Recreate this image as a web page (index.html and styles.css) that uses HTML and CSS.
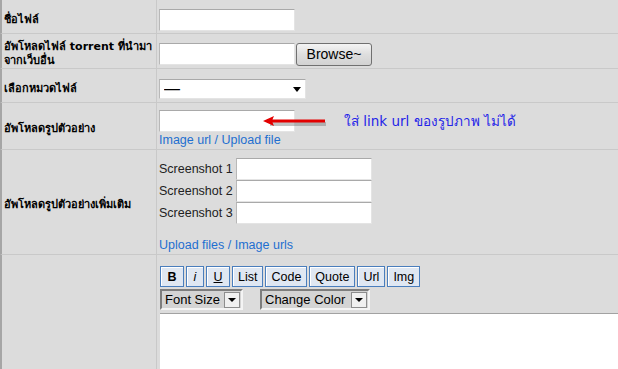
FILE: index.html
```html
<!DOCTYPE html>
<html lang="th">
<head>
    <meta charset="UTF-8">
    <meta name="viewport" content="width=device-width, initial-scale=1.0">
    <title>อัพโหลดไฟล์</title>
    <link rel="stylesheet" href="styles.css">
</head>
<body>
    <table class="upload-form">
        <tr class="row-name">
            <th>ชื่อไฟล์</th>
            <td><input type="text" class="text-field"></td>
        </tr>
        <tr class="row-torrent">
            <th>อัพโหลดไฟล์ torrent ที่นำมา<br>จากเว็บอื่น</th>
            <td><input type="text" class="text-field"><button class="browse-btn">Browse~</button></td>
        </tr>
        <tr class="row-category">
            <th>เลือกหมวดไฟล์</th>
            <td>
                <span class="select-box">
                    <select><option>—</option></select>
                </span>
            </td>
        </tr>
        <tr class="row-preview">
            <th>อัพโหลดรูปตัวอย่าง</th>
            <td>
                <div class="preview-field">
                    <input type="text" class="text-field">
                    <div class="annotation">
                        <svg class="note-arrow" width="66" height="14" viewBox="0 0 66 14">
                            <path d="M8 9 L64 9" stroke="#7a7a7a" stroke-width="4" opacity="0.45"/>
                            <path d="M1 6 L12 1 L10.5 4.6 L63 4.6 L63 7.6 L10.5 7.6 L12 11 Z" fill="#e30000"/>
                        </svg>
                        <span class="note-text">ใส่ link url ของรูปภาพ ไม่ได้</span>
                    </div>
                </div>
                <a class="link" href="#">Image url / Upload file</a>
            </td>
        </tr>
        <tr class="row-screens">
            <th>อัพโหลดรูปตัวอย่างเพิ่มเติม</th>
            <td>
                <div class="screens">
                    <label for="shot1">Screenshot 1</label>
                    <input type="text" id="shot1" class="text-field">
                    <label for="shot2">Screenshot 2</label>
                    <input type="text" id="shot2" class="text-field">
                    <label for="shot3">Screenshot 3</label>
                    <input type="text" id="shot3" class="text-field">
                </div>
                <a class="link" href="#">Upload files / Image urls</a>
            </td>
        </tr>
        <tr class="row-editor">
            <th></th>
            <td>
                <div class="toolbar">
                    <button class="tb-btn tb-bold">B</button>
                    <button class="tb-btn tb-italic">i</button>
                    <button class="tb-btn tb-under">U</button>
                    <button class="tb-btn">List</button>
                    <button class="tb-btn">Code</button>
                    <button class="tb-btn">Quote</button>
                    <button class="tb-btn">Url</button>
                    <button class="tb-btn">Img</button>
                </div>
                <div class="toolbar-selects">
                    <span class="old-select sel-size">Font Size<span class="drop"></span></span>
                    <span class="old-select sel-color">Change Color<span class="drop"></span></span>
                </div>
                <textarea class="editor"></textarea>
            </td>
        </tr>
    </table>
</body>
</html>
```

FILE: styles.css
```css
html, body {
    margin: 0;
    padding: 0;
    overflow: hidden;
}
body {
    background-color: #dcdcdc;
    font-family: "Liberation Sans", "Noto Sans", sans-serif;
    font-size: 12px;
    color: #000;
}
.upload-form {
    border-collapse: separate;
    border-spacing: 0;
    table-layout: fixed;
    width: 100%;
}
.upload-form th,
.upload-form td {
    padding: 6px 0 0 2px;
    vertical-align: middle;
    border-bottom: 1px solid #c9c9c9;
}
.upload-form th {
    width: 150px;
    padding-right: 2px;
    text-align: left;
    font-family: "DejaVu Sans", "Noto Sans", sans-serif;
    font-weight: bold;
    font-size: 11px;
    line-height: 14px;
    border-left: 2px solid #a6a6a6;
    border-right: 1px solid #c9c9c9;
}
.row-name { height: 34px; }
.row-torrent { height: 35px; }
.row-category { height: 34px; }
.row-preview { height: 47px; }
.row-screens { height: 105px; }
.row-editor { height: 114px; }
.row-editor th,
.row-editor td {
    border-bottom: 0;
}
.row-editor td {
    vertical-align: top;
    padding-top: 11px;
}

.text-field {
    box-sizing: border-box;
    width: 136px;
    height: 22px;
    margin: 0;
    padding: 2px 3px;
    border: 1px solid;
    border-color: #a9a9a9 #e4e4e4 #e4e4e4 #b8b8b8;
    background: #fff;
    vertical-align: middle;
    font-family: inherit;
}
.browse-btn {
    box-sizing: border-box;
    width: 76px;
    height: 23px;
    margin-left: 1px;
    padding: 0;
    border: 1px solid #707070;
    border-radius: 3px;
    background: linear-gradient(#f4f4f4, #dedede 50%, #d2d2d2);
    font-family: "Liberation Sans", sans-serif;
    font-size: 14px;
    color: #000;
    vertical-align: middle;
}

.select-box {
    display: inline-block;
    position: relative;
    width: 147px;
    height: 20px;
}
.select-box select {
    appearance: none;
    box-sizing: border-box;
    width: 100%;
    height: 20px;
    margin: 0;
    padding: 0 4px;
    border: 1px solid;
    border-color: #a9a9a9 #e4e4e4 #e4e4e4 #b8b8b8;
    background: #fff;
    font-family: "Liberation Sans", sans-serif;
    font-size: 16px;
    color: #000;
}
.select-box::after {
    content: "";
    position: absolute;
    right: 5px;
    top: 8px;
    border-left: 4px solid transparent;
    border-right: 4px solid transparent;
    border-top: 5px solid #000;
    pointer-events: none;
}

.preview-field {
    position: relative;
    height: 22px;
}
.annotation {
    position: absolute;
    left: 103px;
    top: 0;
    display: flex;
    align-items: center;
    gap: 16px;
    height: 22px;
}
.note-arrow {
    display: block;
    margin-top: 2px;
}
.note-text {
    font-family: "DejaVu Sans", "Noto Sans", sans-serif;
    font-size: 13.5px;
    color: #2424e8;
    white-space: nowrap;
}

.link {
    display: block;
    font-size: 12.5px;
    line-height: 16px;
    color: #1e6fd0;
    text-decoration: none;
    white-space: nowrap;
}

.screens {
    display: grid;
    grid-template-columns: 77px 136px;
    align-items: center;
    font-size: 12.5px;
    color: #222;
    white-space: nowrap;
}
.screens + .link {
    margin-top: 13px;
}

.toolbar {
    display: flex;
    gap: 2px;
    margin-left: 1px;
}
.tb-btn {
    box-sizing: border-box;
    height: 21px;
    padding: 0 5px;
    border: 1px solid #4a7ebd;
    background: #dfe7f2;
    box-shadow: inset 1px 1px #fff;
    font-family: "Liberation Sans", sans-serif;
    font-size: 12.5px;
    color: #000;
}
.tb-bold {
    width: 24px;
    font-weight: bold;
}
.tb-italic {
    width: 18px;
    font-style: italic;
}
.tb-under {
    width: 24px;
    text-decoration: underline;
}

.toolbar-selects {
    display: flex;
    gap: 17px;
    margin: 2px 0 0 1px;
}
.old-select {
    box-sizing: border-box;
    display: flex;
    align-items: center;
    justify-content: space-between;
    height: 21px;
    padding: 0 1px 0 3px;
    border: 2px solid;
    border-color: #7d7d7d #f4f4f4 #f4f4f4 #7d7d7d;
    background: #d4d4d4;
    font-size: 13px;
    white-space: nowrap;
}
.sel-size { width: 83px; }
.sel-color { width: 110px; }
.drop {
    position: relative;
    box-sizing: border-box;
    flex: none;
    width: 16px;
    height: 16px;
    border: 1px solid #8d8d8d;
    background: #f0f0f0;
}
.drop::after {
    content: "";
    position: absolute;
    left: 3px;
    top: 5px;
    border-left: 4px solid transparent;
    border-right: 4px solid transparent;
    border-top: 4px solid #000;
}

.editor {
    display: block;
    box-sizing: border-box;
    width: 100%;
    height: 56px;
    margin: 3px 0 0 1px;
    border: 0;
    border-top: 1px solid #a2a2a2;
    background: #fff;
    resize: none;
}
```
